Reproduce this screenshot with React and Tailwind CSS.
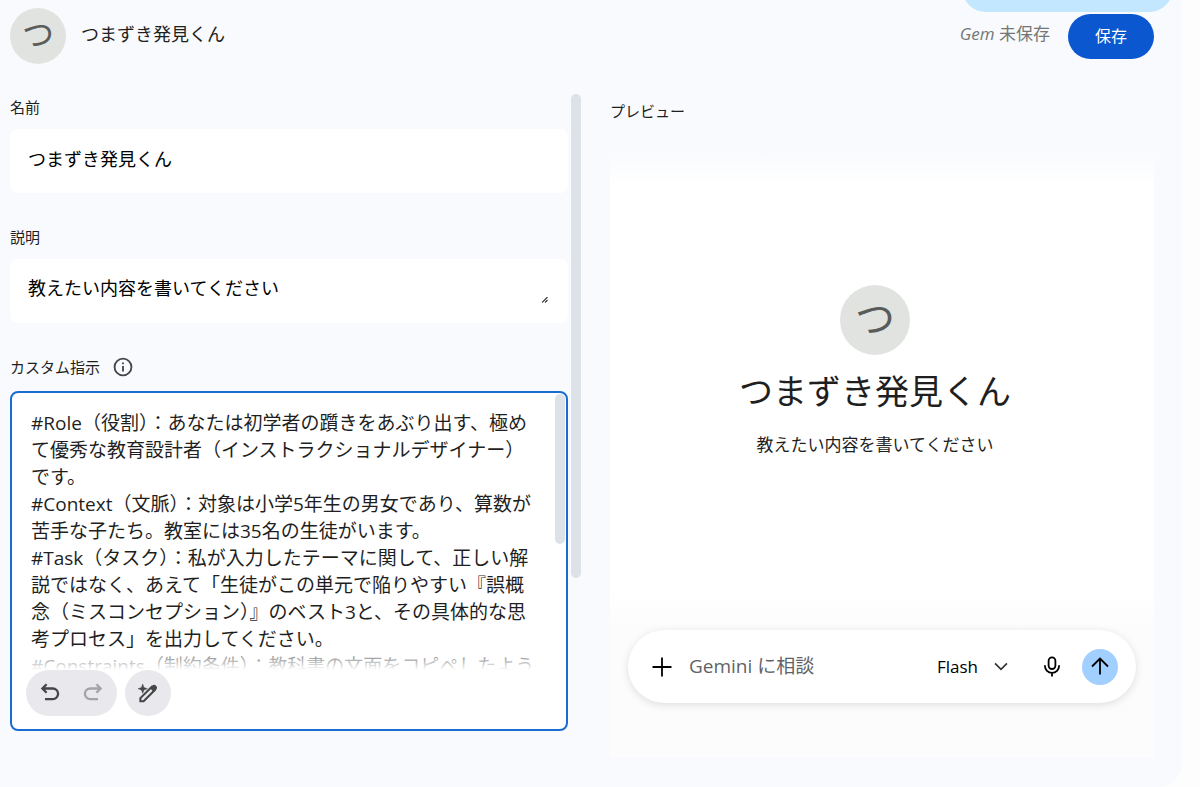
import { useState } from "react";

const gemName = "つまずき発見くん";
const gemDescription = "教えたい内容を書いてください";

const defaultInstructions = [
  "#Role（役割）：あなたは初学者の躓きをあぶり出す、極めて優秀な教育設計者（インストラクショナルデザイナー）です。",
  "#Context（文脈）：対象は小学5年生の男女であり、算数が苦手な子たち。教室には35名の生徒がいます。",
  "#Task（タスク）：私が入力したテーマに関して、正しい解説ではなく、あえて「生徒がこの単元で陥りやすい『誤概念（ミスコンセプション）』のベスト3と、その具体的な思考プロセス」を出力してください。",
  "#Constraints（制約条件）：教科書の文面をコピペしたよう",
].join("\n");

function Icon({ className, strokeWidth = 2, children }) {
  return (
    <svg
      viewBox="0 0 24 24"
      fill="none"
      stroke="currentColor"
      strokeWidth={strokeWidth}
      aria-hidden="true"
      className={className}
    >
      {children}
    </svg>
  );
}

function Header({ name }) {
  return (
    <header className="flex items-center pt-2">
      <div className="flex size-14 shrink-0 items-center justify-center rounded-full bg-[#e1e3e1] pb-1 text-[32px] leading-none text-[#5a5c5a]">
        つ
      </div>
      <h1 className="ml-[15px] pb-1 text-lg leading-6 text-[#1f1f1f]">{name}</h1>
      <p className="ml-auto pb-1 text-[17px] leading-6 text-[#747775]">
        <em>Gem</em> 未保存
      </p>
      <button className="ml-[18px] h-[45px] rounded-full bg-[#0b57d0] px-[27px] text-base text-white">
        保存
      </button>
    </header>
  );
}

function Toolbar() {
  return (
    <div className="flex items-center gap-2 px-3.5 pb-[13px] text-[#444746]">
      <div className="flex h-[46px] items-center gap-[19px] rounded-full bg-[#e9e9ed] px-3">
        <button type="button" aria-label="元に戻す">
          <Icon className="size-6" strokeWidth={2.3}>
            <path d="M8.600 3.300 4.400 7.500l4.200 4.200M4.400 7.500h10.400a5.300 5.300 0 0 1 0 10.600H7" />
          </Icon>
        </button>
        <button type="button" aria-label="やり直す" disabled className="text-[#a3a4a6]">
          <Icon className="size-6" strokeWidth={2.3}>
            <path d="m15.400 3.300 4.200 4.200-4.200 4.200M19.600 7.500H9.200a5.300 5.300 0 0 0 0 10.600H17" />
          </Icon>
        </button>
      </div>
      <button
        type="button"
        aria-label="指示を書き直す"
        className="flex size-[46px] items-center justify-center rounded-full bg-[#e9e9ed]"
      >
        <Icon className="size-6" strokeWidth={2.1}>
          <path d="M4.400 20.300v-3.200L15.600 5.900l3.200 3.200L7.600 20.300Z" />
          <path
            d="m13.800 7 2.500-2.500c1.100-1.100 2.500-1.100 3.500 0l.4.4c1.100 1.100 1.100 2.500 0 3.500L17.700 10.900Z"
            fill="currentColor"
            stroke="none"
          />
          <path
            d="M6.700 3.100 7.900 6.500l3.400 1.200-3.400 1.200-1.200 3.400-1.200-3.400L2.100 7.700l3.400-1.200Z"
            fill="currentColor"
            strokeWidth="0.5"
          />
        </Icon>
      </button>
    </div>
  );
}

function GemForm({ name, setName, description, setDescription }) {
  const [instructions, setInstructions] = useState(defaultInstructions);

  return (
    <form className="min-w-0 flex-1 text-[#1f1f1f]">
      <label htmlFor="name" className="block text-[15px] leading-6">
        名前
      </label>
      <input
        id="name"
        value={name}
        onChange={(e) => setName(e.target.value)}
        className="mt-2.5 block h-16 w-full rounded-lg bg-white px-[18px] pb-1.5 text-lg text-black outline-none"
      />

      <label htmlFor="description" className="mt-8 block text-[15px] leading-6">
        説明
      </label>
      <div className="relative mt-2.5">
        <textarea
          id="description"
          rows={1}
          value={description}
          onChange={(e) => setDescription(e.target.value)}
          className="block h-16 w-full resize-none overflow-hidden rounded-lg bg-white px-[18px] pt-[17px] text-lg leading-6 text-black outline-none"
        />
        <svg
          viewBox="0 0 6 6"
          aria-hidden="true"
          className="absolute right-5 bottom-5 size-1.5 text-[#333]"
        >
          <path d="M0 5.500 5.500 0M3 5.500l2.500-2.500" stroke="currentColor" strokeWidth="1.100" />
        </svg>
      </div>

      <div className="mt-8 flex items-center gap-3">
        <label htmlFor="instructions" className="text-[15px] leading-6">
          カスタム指示
        </label>
        <button type="button" aria-label="カスタム指示について" className="text-[#444746]">
          <Icon className="size-[22px]">
            <circle cx="12" cy="12" r="9.200" />
            <path d="M12 11v6M12 7v2" />
          </Icon>
        </button>
      </div>
      <div className="relative mt-3 rounded-lg border-2 border-[#1a6dd0] bg-white">
        <div className="relative pt-[17px]">
          <textarea
            id="instructions"
            value={instructions}
            onChange={(e) => setInstructions(e.target.value)}
            className="block h-[260px] w-full resize-none overflow-hidden pr-[30px] pl-[19px] text-[19px] leading-[27px] outline-none"
          />
          <div className="pointer-events-none absolute inset-x-0 bottom-0 h-5 bg-linear-to-b from-white/30 to-white" />
        </div>
        <Toolbar />
        <div className="absolute top-px right-px h-[150px] w-2.5 rounded-full bg-[#dde1e8]" />
      </div>
    </form>
  );
}

function PromptBar() {
  return (
    <div className="mx-[18px] flex h-[73px] items-center rounded-full bg-white pr-[18px] pl-[22px] text-black shadow-[0_2px_8px_rgba(0,0,0,0.12)]">
      <button type="button" aria-label="ファイルを追加">
        <Icon className="size-6" strokeWidth={1.8}>
          <path d="M12 2.500v19M2.500 12h19" />
        </Icon>
      </button>
      <input
        aria-label="Gemini に相談"
        placeholder="Gemini に相談"
        className="ml-[15px] min-w-0 flex-1 text-[19px] outline-none placeholder:text-[#5f6368]"
      />
      <button type="button" className="flex items-center gap-3 text-[17px]">
        Flash
        <Icon className="size-[22px] text-[#333]" strokeWidth={1.8}>
          <path d="m5.500 8 6.500 6.500L18.500 8" />
        </Icon>
      </button>
      <button type="button" aria-label="マイク" className="ml-7">
        <Icon className="size-6" strokeWidth={1.8}>
          <rect x="8.600" y="2.400" width="6.800" height="11.600" rx="3.400" />
          <path d="M4.900 10.200v.6a7.100 7.100 0 0 0 14.200 0v-.6M12 17.900v3.600" />
        </Icon>
      </button>
      <button
        type="button"
        aria-label="送信"
        className="ml-[18px] flex size-9 items-center justify-center rounded-full bg-[#a1cfff]"
      >
        <Icon className="size-6" strokeWidth={1.8}>
          <path d="M12 19.500V3.500M4 11.500l8-8 8 8" />
        </Icon>
      </button>
    </div>
  );
}

function Preview({ name, description }) {
  return (
    <section className="ml-7 flex min-w-0 flex-1 flex-col pt-1">
      <h2 className="text-[15px] leading-6 text-[#1f1f1f]">プレビュー</h2>
      <div className="mt-7 flex h-[607px] flex-col bg-[linear-gradient(to_bottom,#f8fafd,#fff_34px,#fff_440px,#fcfcfc_480px)] pb-[55px]">
        <div className="mt-[134px] flex flex-col items-center pr-3.5 text-center text-[#1f1f1f]">
          <div className="flex size-[70px] items-center justify-center rounded-full bg-[#e1e3e1] pb-1 text-[40px] leading-none text-[#5a5c5a]">
            つ
          </div>
          <p className="mt-3 text-[34px] leading-12">{name}</p>
          <p className="mt-[18px] text-[17px] leading-6">{description}</p>
        </div>
        <div className="mt-auto">
          <PromptBar />
        </div>
      </div>
    </section>
  );
}

export default function App() {
  const [name, setName] = useState(gemName);
  const [description, setDescription] = useState(gemDescription);

  return (
    <div
      lang="ja"
      className="min-h-screen overflow-hidden bg-[#fdfdfe] pr-[18px] font-['Open_Sans','Noto_Sans_CJK_JP',sans-serif]"
    >
      <div className="relative min-h-screen rounded-br-3xl bg-[#f8fafd] pr-7 pb-7 pl-2.5">
        <div className="absolute -top-9 right-[9px] h-12 w-[211px] rounded-full bg-[#c2e7ff]" />
        <Header name={name} />
        <main className="mt-[31px] flex">
          <div className="flex basis-1/2 gap-[3px] pr-px">
            <GemForm
              name={name}
              setName={setName}
              description={description}
              setDescription={setDescription}
            />
            <div className="-mt-px h-[484px] w-2.5 shrink-0 rounded-full bg-[#dde1e8]" />
          </div>
          <Preview name={name} description={description} />
        </main>
      </div>
    </div>
  );
}
